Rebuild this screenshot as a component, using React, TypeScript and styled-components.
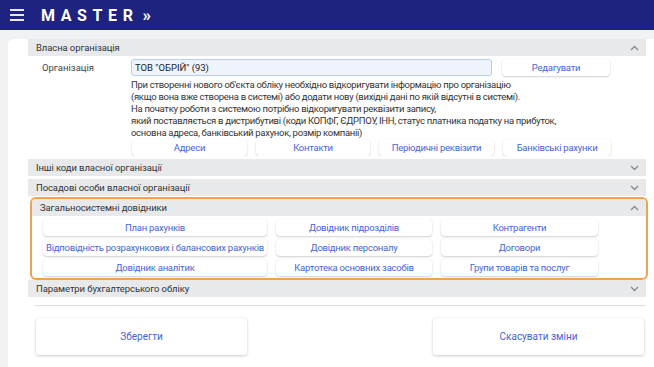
import React, { FC } from 'react'
import styled, { createGlobalStyle } from 'styled-components'

const GlobalStyle = createGlobalStyle`
  html, body {
    margin: 0;
    padding: 0;
    background: #f1f2f4;
    font-family: Roboto, 'Liberation Sans', Arial, sans-serif;
    color: #333;
  }
  * { box-sizing: border-box; }
`

const Chevron: FC<{ up?: boolean }> = ({ up }) => (
  <svg width="9" height="6" viewBox="0 0 9 6">
    <path
      d={up ? 'M1 5 L4.5 1.5 L8 5' : 'M1 1 L4.5 4.5 L8 1'}
      fill="none"
      stroke="#8a8a8a"
      strokeWidth="1.3"
    />
  </svg>
)

const Section: FC<{ title: string; open?: boolean; focused?: boolean; children?: React.ReactNode }> = ({
  title,
  open,
  focused,
  children,
}) => (
  <SectionBox $focused={focused}>
    <SectionHead>
      <span>{title}</span>
      <Chevron up={open} />
    </SectionHead>
    {open && children}
  </SectionBox>
)

const refButtons = [
  'План рахунків',
  'Довідник підрозділів',
  'Контрагенти',
  'Відповідність розрахункових і балансових рахунків',
  'Довідник персоналу',
  'Договори',
  'Довідник аналітик',
  'Картотека основних засобів',
  'Групи товарів та послуг',
]

export default function App() {
  return (
    <>
      <GlobalStyle />
      <TopBar>
        <Burger>
          <i />
          <i />
          <i />
        </Burger>
        <Logo>
          MASTER<Quote>»</Quote>
        </Logo>
      </TopBar>
      <Main>
        <Panel>
          <Sections>
            <Section title="Власна організація" open>
              <OrgBody>
                <Label>Організація</Label>
                <Input>ТОВ "ОБРІЙ" (93)</Input>
                <Btn $w={108}>Редагувати</Btn>
                <Hint>
                  При створенні нового об'єкта обліку необхідно відкоригувати інформацію про організацію
                  <br />
                  (якщо вона вже створена в системі) або додати нову (вихідні дані по якій відсутні в системі).
                  <br />
                  На початку роботи з системою потрібно відкоригувати реквізити запису,
                  <br />
                  який поставляється в дистрибутиві (коди КОПФГ, ЄДРПОУ, ІНН, статус платника податку на прибуток,
                  <br />
                  основна адреса, банківський рахунок, розмір компанії)
                </Hint>
                <LinkRow>
                  <Btn>Адреси</Btn>
                  <Btn>Контакти</Btn>
                  <Btn>Періодичні реквізити</Btn>
                  <Btn>Банківські рахунки</Btn>
                </LinkRow>
              </OrgBody>
            </Section>
            <Section title="Інші коди власної організації" />
            <Section title="Посадові особи власної організації" />
            <Section title="Загальносистемні довідники" open focused>
              <RefGrid>
                {refButtons.map((b) => (
                  <Btn key={b}>{b}</Btn>
                ))}
              </RefGrid>
            </Section>
            <Section title="Параметри бухгалтерського обліку" />
          </Sections>
          <Divider />
          <Footer>
            <BigBtn>Зберегти</BigBtn>
            <BigBtn>Скасувати зміни</BigBtn>
          </Footer>
        </Panel>
      </Main>
    </>
  )
}

const TopBar = styled.header`
  height: 30px;
  background: #1f2380;
  display: flex;
  align-items: center;
  padding-left: 10px;
`

const Burger = styled.div`
  width: 14px;
  display: flex;
  flex-direction: column;
  gap: 3px;
  i {
    display: block;
    height: 2px;
    background: #e6e8f5;
  }
`

const Logo = styled.div`
  margin-left: 17px;
  color: #fff;
  font-size: 16px;
  font-weight: 700;
  letter-spacing: 5.6px;
  display: flex;
  align-items: center;
`

const Quote = styled.span`
  margin-left: 4px;
  font-size: 17px;
  letter-spacing: 0;
`

const Main = styled.main`
  padding: 9px 0 0 8px;
`

const Panel = styled.section`
  background: #fff;
  border-top-left-radius: 6px;
  min-height: 328px;
  padding: 0 8px 0 20px;
`

const Sections = styled.div`
  display: flex;
  flex-direction: column;
  gap: 3px;
`

const SectionBox = styled.div<{ $focused?: boolean }>`
  border: ${(p) => (p.$focused ? '2.5px solid #f5a04c' : 'none')};
  border-radius: ${(p) => (p.$focused ? '6px' : '0')};
  margin: ${(p) => (p.$focused ? '-2px -2px -3px 2px' : '0')};
  padding-bottom: ${(p) => (p.$focused ? '2px' : '0')};
  overflow: hidden;
`

const SectionHead = styled.div`
  height: 17px;
  background: #e8e9eb;
  display: flex;
  align-items: center;
  justify-content: space-between;
  padding: 0 7px 0 8px;
  font-size: 9.5px;
  letter-spacing: -0.1px;
  color: #333;
`

const OrgBody = styled.div`
  display: grid;
  grid-template-columns: 103px 361px 118px;
  padding: 3px 0 0;
  align-items: center;
`

const Label = styled.div`
  padding-left: 14px;
  font-size: 9.5px;
  color: #444;
`

const Input = styled.div`
  height: 17px;
  background: #eef3fc;
  border: 1px solid #b9cdf0;
  border-radius: 3px;
  font-size: 9.5px;
  color: #222;
  padding-left: 3px;
  display: flex;
  align-items: center;
`

const Hint = styled.p`
  grid-column: 2 / 4;
  margin: 3px 0 0;
  font-size: 9.5px;
  letter-spacing: -0.3px;
  line-height: 12px;
  color: #333;
  white-space: nowrap;
`

const LinkRow = styled.div`
  grid-column: 2 / 4;
  padding-left: 1px;
  display: grid;
  grid-template-columns: 115px 114px 115px 108px;
  column-gap: 9px;
`

const Btn = styled.button<{ $w?: number }>`
  width: ${(p) => (p.$w ? `${p.$w}px` : '100%')};
  justify-self: ${(p) => (p.$w ? 'end' : 'stretch')};
  height: 17px;
  border: none;
  border-radius: 4px;
  background: #fff;
  box-shadow: 0 1px 2px rgba(0, 0, 0, 0.18), 0 0 1px rgba(0, 0, 0, 0.1);
  font-family: inherit;
  font-size: 9.5px;
  letter-spacing: -0.25px;
  color: #4466d6;
  padding: 0;
  white-space: nowrap;
  overflow: hidden;
  cursor: pointer;
`

const RefGrid = styled.div`
  display: grid;
  grid-template-columns: 224px 156px 157px;
  gap: 3px 9px;
  padding: 3px 0 0 11px;
`

const Divider = styled.hr`
  margin: 8px 0 0 7px;
  border: none;
  border-top: 1px solid #dcdcdc;
`

const Footer = styled.div`
  display: flex;
  justify-content: space-between;
  padding: 12px 2px 0 8px;
`

const BigBtn = styled.button`
  width: 211px;
  height: 37px;
  border: none;
  border-radius: 3px;
  background: #fff;
  box-shadow: 0 1px 3px rgba(0, 0, 0, 0.2), 0 0 1px rgba(0, 0, 0, 0.1);
  font-family: inherit;
  font-size: 10px;
  color: #4466d6;
  cursor: pointer;
`
